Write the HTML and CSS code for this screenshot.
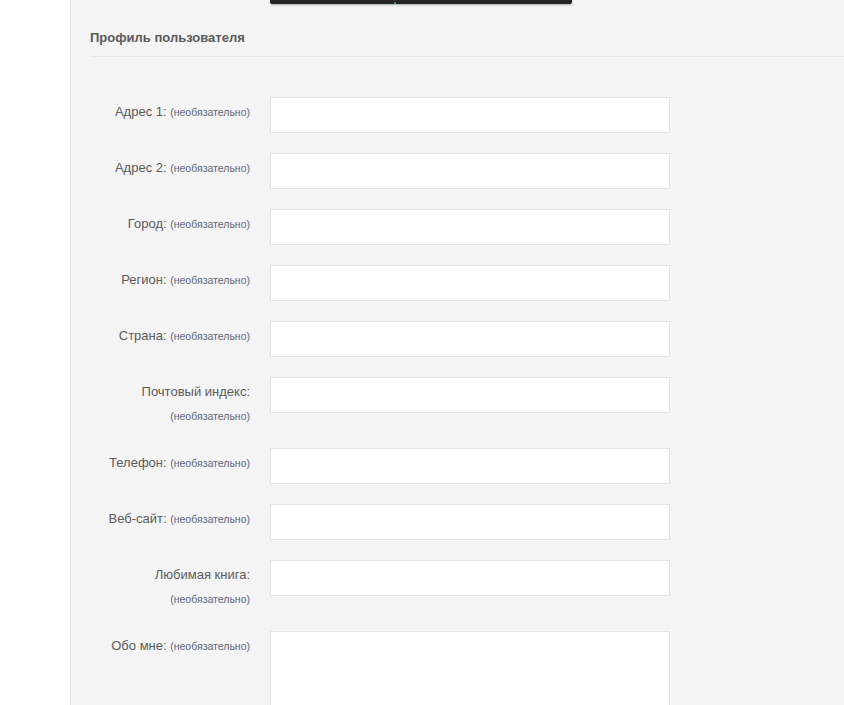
FILE: index.html
```html
<!DOCTYPE html>
<html lang="ru">
<head>
    <meta charset="UTF-8">
    <meta name="viewport" content="width=device-width, initial-scale=1.0">
    <title>Профиль пользователя</title>
    <link rel="stylesheet" href="styles.css">
</head>
<body>
    <div class="page">
        <div class="side"></div>
        <main class="panel">
            <div class="toolbar"><span class="toolbar-mark"></span></div>
            <h2 class="section-title">Профиль пользователя</h2>
            <form class="profile-form">
                <div class="row">
                    <label class="label">Адрес 1: <span class="optional">(необязательно)</span></label>
                    <input class="field" type="text">
                </div>
                <div class="row">
                    <label class="label">Адрес 2: <span class="optional">(необязательно)</span></label>
                    <input class="field" type="text">
                </div>
                <div class="row">
                    <label class="label">Город: <span class="optional">(необязательно)</span></label>
                    <input class="field" type="text">
                </div>
                <div class="row">
                    <label class="label">Регион: <span class="optional">(необязательно)</span></label>
                    <input class="field" type="text">
                </div>
                <div class="row">
                    <label class="label">Страна: <span class="optional">(необязательно)</span></label>
                    <input class="field" type="text">
                </div>
                <div class="row">
                    <label class="label">Почтовый индекс: <span class="optional">(необязательно)</span></label>
                    <input class="field" type="text">
                </div>
                <div class="row">
                    <label class="label">Телефон: <span class="optional">(необязательно)</span></label>
                    <input class="field" type="text">
                </div>
                <div class="row">
                    <label class="label">Веб-сайт: <span class="optional">(необязательно)</span></label>
                    <input class="field" type="text">
                </div>
                <div class="row">
                    <label class="label">Любимая книга: <span class="optional">(необязательно)</span></label>
                    <input class="field" type="text">
                </div>
                <div class="row">
                    <label class="label">Обо мне: <span class="optional">(необязательно)</span></label>
                    <textarea class="field field-area"></textarea>
                </div>
            </form>
        </main>
    </div>
</body>
</html>
```

FILE: styles.css
```css
body { margin: 0; padding: 0; font-family: "Liberation Sans", Arial, sans-serif; background: #fff; color: #555; }
.page { display: flex; min-height: 705px; }
.side { width: 70px; flex: none; background: #fff; }
.panel {
    flex: 1;
    background: #f4f4f4;
    border-left: 1px solid #e4e4e4;
    padding-left: 19px;
}
.toolbar {
    position: relative;
    width: 302px;
    height: 4px;
    margin-left: 180px;
    background: #242424;
    border-radius: 0 0 2px 2px;
    box-shadow: 0 1px 2px rgba(0, 0, 0, 0.3);
}
.toolbar-mark {
    position: absolute;
    left: 124px;
    bottom: 0;
    width: 2px;
    height: 2px;
    background: #3a8a9a;
}
.section-title {
    margin: 25px 0 0;
    padding-bottom: 9px;
    font-size: 13px;
    line-height: 18px;
    font-weight: bold;
    color: #5a5a5a;
    border-bottom: 1px solid #e6e6e6;
}
.profile-form { padding-top: 40px; }
.row {
    display: flex;
    align-items: flex-start;
    gap: 20px;
    margin-bottom: 20px;
}
.label {
    width: 160px;
    flex: none;
    text-align: right;
    font-size: 13px;
    line-height: 24px;
    padding-top: 3px;
    color: #5a5a5a;
}
.optional { font-size: 10.5px; line-height: 10px; color: #5e6876; }
.field {
    width: 400px;
    height: 36px;
    box-sizing: border-box;
    margin: 0;
    background: #fff;
    border: 1px solid #e4e4e4;
    font-family: inherit;
}
.field-area { height: 110px; resize: none; }
```
